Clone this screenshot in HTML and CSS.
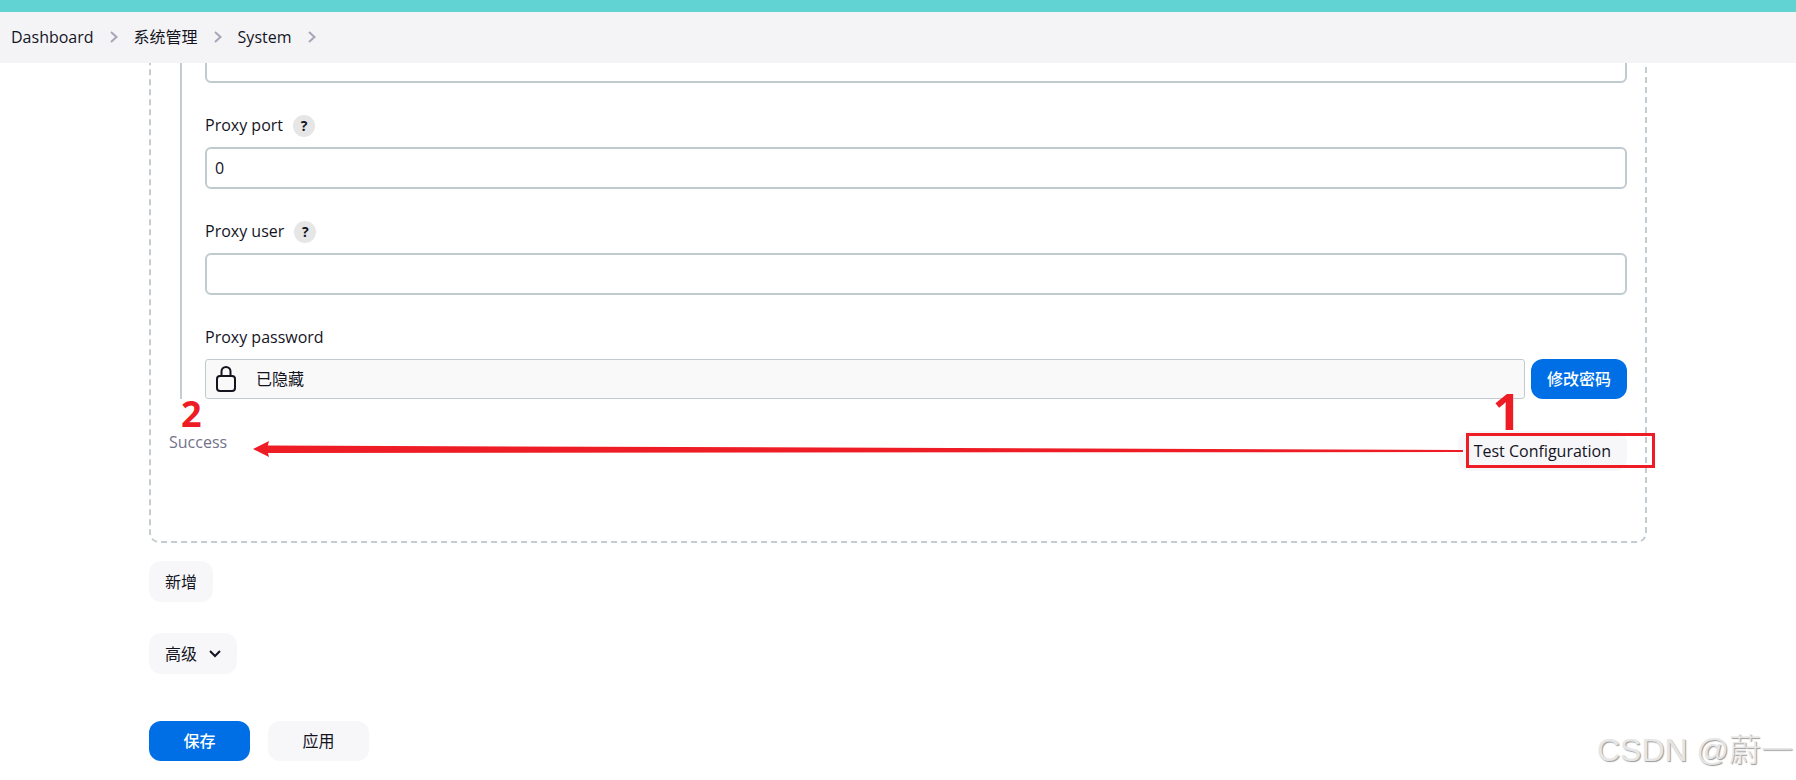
FILE: index.html
```
<!DOCTYPE html>
<html lang="zh-CN">
<head>
    <meta charset="UTF-8">
    <meta name="viewport" content="width=device-width, initial-scale=1.0">
    <title>System [Jenkins]</title>
    <link rel="stylesheet" href="styles.css">
</head>
<body>

<header class="page-header">
    <nav class="breadcrumbs">
        <a href="#">Dashboard</a>
        <svg class="separator" viewBox="0 0 8 12"><path d="M1 1l5.5 5L1 11"/></svg>
        <a href="#">系统管理</a>
        <svg class="separator" viewBox="0 0 8 12"><path d="M1 1l5.5 5L1 11"/></svg>
        <a href="#">System</a>
        <svg class="separator" viewBox="0 0 8 12"><path d="M1 1l5.5 5L1 11"/></svg>
    </nav>
</header>

<main class="config">
    <form class="config-form">
        <section class="chunk">
            <div class="nested">
                <div class="field">
                    <input class="text-input" type="text" aria-label="Proxy host">
                </div>
                <div class="field">
                    <div class="field-label">
                        <label for="proxyPort">Proxy port</label>
                        <button class="help" type="button">?</button>
                    </div>
                    <input class="text-input" type="text" id="proxyPort" value="0">
                </div>
                <div class="field">
                    <div class="field-label">
                        <label for="proxyUser">Proxy user</label>
                        <button class="help" type="button">?</button>
                    </div>
                    <input class="text-input" type="text" id="proxyUser">
                </div>
                <div class="field">
                    <div class="field-label"><span>Proxy password</span></div>
                    <div class="password-row">
                        <div class="hidden-password">
                            <svg class="lock" viewBox="0 0 20 26">
                                <rect x="1" y="10" width="18" height="15" rx="3"/>
                                <path d="M5.500 10V5.500a4.500 4.500 0 0 1 9 0V10"/>
                            </svg>
                            <span>已隐藏</span>
                        </div>
                        <button class="button primary" type="button">修改密码</button>
                    </div>
                </div>
            </div>

            <div class="validate-row">
                <span class="result">Success</span>
                <button class="button" type="button">Test Configuration</button>

                <!-- step marks -->
                <span class="step step-two">2</span>
                <span class="step step-one">1</span>
                <span class="frame"></span>
                <div class="arrow">
                    <svg class="arrow-head" viewBox="0 0 16 16"><path d="M0 8L16 0L14 8L16 16z"/></svg>
                    <svg class="arrow-line" viewBox="0 0 100 16" preserveAspectRatio="none"><path d="M0 4.500L100 9V11L0 12z"/></svg>
                </div>
            </div>
        </section>

        <button class="button add" type="button">新增</button>

        <button class="button advanced" type="button">
            高级
            <svg class="chevron" viewBox="0 0 12 8"><path d="M1 1l5 5 5-5"/></svg>
        </button>

        <div class="actions">
            <button class="button primary wide" type="submit">保存</button>
            <button class="button wide" type="button">应用</button>
        </div>
    </form>
</main>

<div class="watermark">CSDN @蔚一</div>

</body>
</html>
```
FILE: styles.css
```
* {
    box-sizing: border-box;
}

body {
    margin: 0;
    min-height: 100vh;
    background: #fff;
    color: #14141f;
    font-family: "Open Sans", "Noto Sans CJK SC", sans-serif;
    font-size: 16px;
    line-height: 22px;
    position: relative;
    overflow: hidden;
}

button,
input {
    font: inherit;
    color: inherit;
}

.page-header {
    position: sticky;
    top: 0;
    z-index: 2;
    border-top: 12px solid #62d3d3;
    background: #f4f4f7;
}

.breadcrumbs {
    display: flex;
    align-items: center;
    gap: 16px;
    height: 51px;
    padding: 0 11px 2px;
}

.breadcrumbs a {
    color: inherit;
    text-decoration: none;
}

svg {
    fill: none;
    stroke: currentColor;
    stroke-width: 2;
    flex: none;
}

.separator {
    width: 8px;
    height: 12px;
    color: #a6a6b8;
}

/* the form is scrolled under the header */
.config {
    margin-top: -24px;
    padding: 0 149px;
}

.config-form {
    display: flex;
    flex-direction: column;
    align-items: flex-start;
}

.chunk {
    width: 100%;
    padding: 0 18px 70px;
    border: 2px dashed #c3ccd1;
    border-radius: 10px;
}

.nested {
    display: flex;
    flex-direction: column;
    gap: 32px;
    margin-left: 11px;
    padding-left: 23px;
    border-left: 2px solid #c3ccd1;
}

.field-label {
    display: flex;
    align-items: center;
    gap: 10px;
    height: 22px;
    margin-bottom: 10px;
    line-height: 20px;
}

.field-label label,
.field-label span {
    padding-bottom: 2px;
}

.help {
    width: 22px;
    height: 22px;
    padding: 0;
    border: none;
    border-radius: 50%;
    background: #e6e6e6;
    font-size: 14px;
    font-weight: bold;
}

.text-input {
    display: block;
    width: 100%;
    height: 42px;
    padding: 0 8px;
    border: 2px solid #c0cbcf;
    border-radius: 6px;
    background: #fff;
}

.password-row {
    display: flex;
    gap: 6px;
}

.hidden-password {
    flex: 1;
    display: flex;
    align-items: center;
    gap: 20px;
    height: 40px;
    padding: 0 10px;
    border: 1px solid #c0cbcf;
    border-radius: 3px;
    background: #f9f9f9;
}

.lock {
    width: 20px;
    height: 26px;
}

.button {
    height: 40px;
    padding: 0 16px;
    border: none;
    border-radius: 12px;
    background: #f7f7fa;
    cursor: pointer;
}

.primary {
    background: #006fe6;
    color: #fff;
    font-weight: 500;
}

.validate-row {
    position: relative;
    display: flex;
    align-items: flex-start;
    justify-content: space-between;
    padding-top: 32px;
}

.result {
    color: #73738c;
}

.add,
.advanced {
    height: 41px;
}

.add {
    margin-top: 18px;
}

.advanced {
    display: flex;
    align-items: center;
    gap: 12px;
    margin-top: 31px;
}

.chevron {
    width: 12px;
    height: 8px;
}

.actions {
    display: flex;
    gap: 18px;
    margin-top: 47px;
}

.wide {
    width: 101px;
}

/* red marks over the form */
.step {
    position: absolute;
    color: #ee1c24;
    font-weight: bold;
}

.step-two {
    left: 12px;
    top: 2px;
    font-size: 36px;
    line-height: 26px;
}

.step-one {
    right: 106px;
    top: -6px;
    font-size: 50px;
    line-height: 36px;
}

.frame {
    position: absolute;
    right: -28px;
    top: 34px;
    width: 189px;
    height: 35px;
    border: 3px solid #ee1c24;
}

.arrow {
    position: absolute;
    left: 84px;
    right: 164px;
    top: 42px;
    display: flex;
    color: #ee1c24;
}

.arrow svg {
    height: 16px;
    fill: currentColor;
    stroke: none;
}

.arrow-head {
    width: 16px;
}

.arrow-line {
    flex: 1;
    width: 0;
    margin-left: -2px;
}

.watermark {
    position: absolute;
    right: 3px;
    bottom: 6px;
    color: #e6e6e6;
    font-family: "Liberation Sans", "Noto Sans CJK SC", sans-serif;
    font-size: 32px;
    font-weight: 300;
    line-height: 48px;
    text-shadow: 1px 1px 1px #999;
}
```
